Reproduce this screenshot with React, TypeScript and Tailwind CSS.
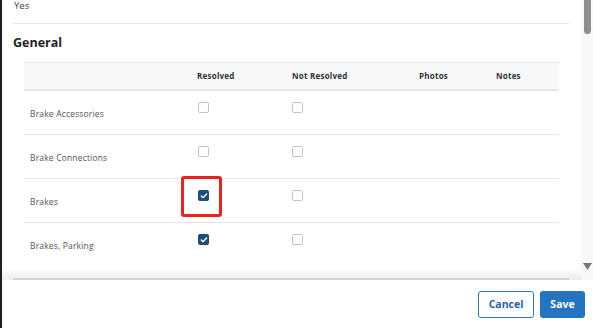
import { Check } from "lucide-react"

const rows = [
  { name: "Brake Accessories", resolved: false, highlight: false },
  { name: "Brake Connections", resolved: false, highlight: false },
  { name: "Brakes", resolved: true, highlight: true },
  { name: "Brakes, Parking", resolved: true, highlight: false },
]

const Box = ({ checked }: { checked: boolean }) => (
  <div
    className={`w-[11px] h-[11px] rounded-[2px] flex items-center justify-center ${
      checked ? "bg-[#1c4e7b]" : "border border-[#c4c4c4] bg-white"
    }`}
  >
    {checked && <Check size={8} strokeWidth={4} className="text-white" />}
  </div>
)

const App = () => {
  return (
    <div className="w-[593px] h-[328px] flex bg-white overflow-hidden font-['Open_Sans',sans-serif]">
      <div className="w-[2px] bg-[#1e1e1e]" />
      <div className="flex-1 flex flex-col">
        {/* scroll area */}
        <div className="h-[280px] flex">
          <div className="flex-1 relative overflow-hidden">
            <div className="pl-[11px] pr-[12px]">
              <div className="text-[9.5px] text-[#444] pl-[1px] leading-[12px]">Yes</div>
              <div className="mt-[11px] border-t border-[#e5e5e5]" />
              <h2 className="mt-[10px] text-[12.5px] font-bold text-[#222] leading-[18px]">General</h2>

              <div className="mt-[10px] ml-[11px] mr-[10px]">
                <div className="grid grid-cols-[173px_95px_127px_77px_1fr] h-[29px] items-center bg-[#f7f8fa] border-t border-[#e4e6ea] border-b-2 border-b-[#e3e4e7] text-[8px] tracking-[0.03em] font-bold text-[#333]">
                  <div />
                  <div>Resolved</div>
                  <div>Not Resolved</div>
                  <div>Photos</div>
                  <div>Notes</div>
                </div>
                {rows.map((r, i) => (
                  <div
                    key={r.name}
                    className={`grid grid-cols-[173px_95px_127px_77px_1fr] h-[44px] ${
                      i < rows.length - 1 ? "border-b border-[#e6e6e6]" : ""
                    }`}
                  >
                    <div className="pl-[6px] pt-[16px] text-[8.5px] tracking-[0.02em] text-[#555] leading-[14px]">{r.name}</div>
                    <div className="pt-[11px] pl-[1px]">
                      <div className="relative w-[11px]">
                        <Box checked={r.resolved} />
                        {r.highlight && (
                          <div className="absolute -left-[17px] -top-[14px] w-[41px] h-[41px] border-[3px] border-[#e8231d] rounded-[3px]" />
                        )}
                      </div>
                    </div>
                    <div className="pt-[11px]">
                      <Box checked={false} />
                    </div>
                    <div />
                    <div />
                  </div>
                ))}
              </div>
            </div>
            {/* bottom fade */}
            <div className="absolute left-0 right-0 bottom-0 h-[12px] bg-gradient-to-b from-transparent to-[#ececec]">
              <div className="absolute left-[11px] right-[12px] bottom-0 h-[2px] bg-[#d2d2d2]" />
            </div>
          </div>
          {/* scrollbar */}
          <div className="w-[12px] bg-[#f8f8f8] flex flex-col items-center justify-between">
            <div className="w-[7px] h-[34px] bg-[#8e8e8e] rounded-b-[4px]" />
            <svg width="9" height="8" viewBox="0 0 9 8" className="mb-[9px]">
              <polygon points="0,0 9,0 4.5,7" fill="#777" />
            </svg>
          </div>
        </div>

        {/* footer */}
        <div className="flex-1 flex justify-end items-start pt-[11px] pr-[8px] gap-[6px]">
          <button className="w-[56px] h-[27px] rounded-[3px] border border-[#2b78c2] bg-white text-[#1f63a6] text-[10.5px] font-bold">
            Cancel
          </button>
          <button className="w-[45px] h-[27px] rounded-[3px] bg-[#2574c0] text-white text-[10.5px] font-bold">
            Save
          </button>
        </div>
      </div>
    </div>
  )
}

export default App
